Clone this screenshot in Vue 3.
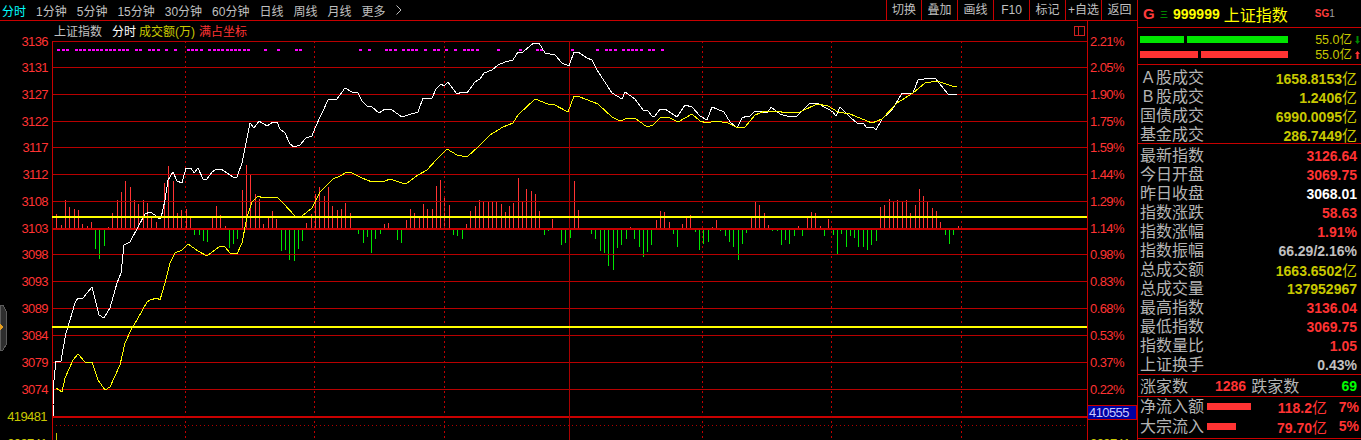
<script setup>
const periods = ['1分钟', '5分钟', '15分钟', '30分钟', '60分钟', '日线', '周线', '月线', '更多']
const tools = ['切换', '叠加', '画线', 'F10', '标记', '+自选', '返回']

// 价格线和百分比刻度
const grid = [
  [41, '3136', '2.21%'], [67, '3131', '2.05%'], [94, '3127', '1.90%'], [121, '3122', '1.75%'],
  [147, '3117', '1.59%'], [174, '3112', '1.44%'], [201, '3108', '1.29%'], [228, '3103', '1.14%'],
  [254, '3098', '0.98%'], [281, '3093', '0.83%'], [308, '3089', '0.68%'], [335, '3084', '0.53%'],
  [362, '3079', '0.37%'], [389, '3074', '0.22%']
]
const dotted = [185, 314, 444, 702, 831, 961]

const slot = (i) => Math.round(52 + 4.3125 * i)

const volumes = [
  0, 14, 3, 28, 21, 19, 18, 4, 2, 6, -20, -30, -17, 1, 15, 28, 36, 47, 41, 28, 24, 28, 25, 12, 6, 0, 45, 62, 47, 15,
  18, 19, 11, -6, -6, -12, -13, 11, 22, 13, 2, -19, -15, -10, 38, 63, 54, 34, 29, 4, 11, 17, 9, -22, -21, -31, -32, -20, -12, 5,
  14, 34, 41, 32, 41, 22, 18, 19, 25, 15, -1, -5, -14, -8, -24, -10, -5, 4, 5, -1, -11, -14, 8, 19, 15, 11, 24, 19, 19, 42,
  48, 31, 23, -6, -7, -10, 4, 17, 22, 28, 27, 26, 26, 26, 24, 16, 22, 25, 50, 26, 39, 37, 34, 17, -6, -2, 9, 0, -16, -14,
  -9, 47, 18, -1, 0, -5, -10, -22, -24, -37, -41, -19, -16, -10, 1, -10, -18, -28, -23, -16, 8, 17, 16, 6, -5, -18, 4, 11, 13, -3,
  -21, -15, -13, 1, 8, -2, -7, -13, -18, -31, -15, -4, 10, 26, 23, 15, 3, -2, -2, -16, -11, -15, -7, 2, -7, 10, 16, 15, 2, -7,
  9, -6, -26, -5, -18, -7, -9, -18, -18, -21, -16, -12, 21, 23, 29, 26, 28, 26, 28, 15, 23, 39, 32, 27, 20, 17, 6, -6, -15, -6, 2
]
const bars = volumes.map((v, i) => ({
  x: slot(i) + 0.5,
  y1: v > 0 ? 228 - v : 229,
  y2: v > 0 ? 228 : 229 + Math.abs(v),
  color: v > 0 ? '#ff3333' : '#00e600',
  on: v !== 0
})).filter((b) => b.on)

const dots = [
  1, 2, 3, 5, 6, 7, 8, 9, 10, 11, 12, 13, 14, 15, 16, 17, 19, 20, 22, 23, 24, 26, 28, 31, 32, 33, 34,
  36, 37, 38, 39, 40, 41, 42, 43, 44, 45, 49, 52, 56, 57, 71, 73, 77, 78, 79, 81, 82, 83, 84, 86, 88, 89,
  91, 93, 95, 96, 97, 98, 103, 108, 112, 113, 120, 126, 128, 129, 130, 132, 133, 134, 135, 136, 138, 139, 141
]

const whiteLine = `53,416 53,405 54,380 56,361 61,361 62,355 66,333 70,320 75,303 78,298 83,298 92,287 99,315 104,318 110,308
  117,283 121,273 124,245 130,242 138,227 145,214 150,212 155,215 158,218 161,218 165,200 168,180 173,172 177,181 182,183
  186,168 191,168 194,173 198,168 203,179 207,179 212,172 217,169 221,169 227,173 233,177 237,177 242,163 245,148 250,123
  254,128 259,121 267,126 273,122 277,122 280,129 285,133 290,144 294,147 300,145 306,138 312,136 315,128 322,113 328,100
  337,99 345,88 352,92 355,92 358,93 362,101 367,106 372,107 379,113 385,109 392,110 402,117 408,115 418,112 423,98 432,98
  436,89 441,84 444,86 448,82 457,94 462,92 467,93 475,82 480,79 484,73 492,70 498,65 505,62 513,60 518,52 523,52 530,46
  534,43 539,43 545,53 550,54 555,55 562,63 569,66 574,52 578,52 587,58 592,60 597,70 612,93 622,99 625,92 635,99 643,110
  648,111 652,116 655,116 660,109 665,109 677,117 685,105 692,107 700,116 707,120 712,107 724,112 730,122 737,128 742,118
  747,116 750,116 755,111 763,112 768,112 771,107 780,114 790,117 797,116 810,103 817,103 828,109 833,112 836,116 840,107
  850,117 858,124 863,123 867,128 873,127 876,130 882,119 892,110 902,93 913,93 918,80 930,78 935,78 948,94 957,94`

const yellowLine = `56,388 62,392 65,378 73,360 78,354 85,362 92,362 98,380 105,390 110,387 120,365 125,343 132,328 137,320 147,302
  150,300 157,298 160,300 165,283 170,263 175,253 182,250 188,244 198,251 207,256 215,250 220,246 225,247 230,253 237,254
  242,243 247,217 252,202 258,196 263,198 277,197 283,203 295,216 302,216 312,208 320,192 333,179 340,176 347,172 352,173
  362,178 372,182 385,181 390,179 402,183 407,183 418,175 427,170 437,159 447,149 457,155 467,157 478,147 490,135 503,127
  513,123 518,115 535,99 548,104 553,104 568,112 574,96 580,97 598,104 612,117 620,121 628,118 635,118 647,127 653,125
  660,118 668,117 678,122 692,114 700,121 707,123 715,121 728,123 738,128 745,127 755,115 765,111 775,111 788,113 800,112
  817,104 828,106 838,112 850,114 872,123 882,119 897,103 913,93 925,83 937,81 952,86 957,86`

const meters = [
  { segs: [44, 101], color: '#00e600', text: '55.0亿', up: false },
  { segs: [58, 87], color: '#ff3333', text: '55.0亿', up: true }
]

const turnover = [
  { tag: 'A', label: '股成交', value: '1658.8153', unit: '亿' },
  { tag: 'B', label: '股成交', value: '1.2406', unit: '亿' },
  { label: '国债成交', value: '6990.0095', unit: '亿' },
  { label: '基金成交', value: '286.7449', unit: '亿' }
]

const stats = [
  { label: '最新指数', value: '3126.64', tone: 'red' },
  { label: '今日开盘', value: '3069.75', tone: 'red' },
  { label: '昨日收盘', value: '3068.01', tone: 'white' },
  { label: '指数涨跌', value: '58.63', tone: 'red' },
  { label: '指数涨幅', value: '1.91%', tone: 'red' },
  { label: '指数振幅', value: '66.29/2.16%', tone: 'gray' },
  { label: '总成交额', value: '1663.6502', unit: '亿', tone: 'olive' },
  { label: '总成交量', value: '137952967', tone: 'olive' },
  { label: '最高指数', value: '3136.04', tone: 'red' },
  { label: '最低指数', value: '3069.75', tone: 'red' },
  { label: '指数量比', value: '1.05', tone: 'red' },
  { label: '上证换手', value: '0.43%', tone: 'gray' }
]

const flows = [
  { label: '净流入额', width: 44, value: '118.2', pct: '7%' },
  { label: '大宗流入', width: 29, value: '79.70', pct: '5%' }
]
</script>

<template>
  <div class="screen">
    <div class="main">
      <div class="toolbar">
        <span class="period active">分时</span>
        <span v-for="p in periods" :key="p" class="period">{{ p }}</span>
        <svg class="more" width="6" height="10" viewBox="0 0 6 10">
          <path d="M0.5 0.5 L5 5 L0.5 9.5" fill="none" stroke="#c0c0c0" />
        </svg>
        <div class="tools">
          <span v-for="t in tools" :key="t" class="tool">{{ t }}</span>
        </div>
      </div>

      <svg class="chart" width="1137" height="419" viewBox="0 21 1137 419">
        <g shape-rendering="crispEdges">
          <polygon points="0,305 3,305 6,311 6,345 3,350 0,350" fill="#2e2e2e" stroke="#5c5c5c" />
          <polygon points="0,323 3,327 0,331" fill="#e8a020" />

          <line v-for="b in bars" :key="b.x" :x1="b.x" :x2="b.x" :y1="b.y1" :y2="b.y2" :stroke="b.color" />

          <line v-for="g in grid" :key="g[0]" x1="52" x2="1087" :y1="g[0] + 0.5" :y2="g[0] + 0.5" stroke="#b80000" />
          <rect x="52" y="228" width="1035" height="2" fill="#c80000" />
          <rect x="52" y="416" width="1035" height="2" fill="#c80000" />
          <line x1="52" x2="1087" y1="425.5" y2="425.5" stroke="#b00000" stroke-dasharray="1 3" />

          <line v-for="x in dotted" :key="x" :x1="x + 0.5" :x2="x + 0.5" y1="41" y2="440" stroke="#c00000" stroke-dasharray="2 3" />
          <line x1="569.5" x2="569.5" y1="41" y2="440" stroke="#a80000" />
          <line x1="52.5" x2="52.5" y1="41" y2="440" stroke="#c80000" />
          <line x1="1087.5" x2="1087.5" y1="21" y2="440" stroke="#c80000" />

          <rect v-for="d in dots" :key="d" :x="slot(d) + 1" y="49" width="3" height="2" fill="#ff00ff" />

          <polyline :points="whiteLine" fill="none" stroke="#ffffff" />
          <polyline :points="yellowLine" fill="none" stroke="#ffff00" />

          <rect x="52" y="216" width="1035" height="2" fill="#ffff00" />
          <rect x="52" y="326" width="1035" height="2" fill="#ffff00" />

          <rect x="1074.5" y="26.5" width="10" height="9" fill="none" stroke="#d02020" />
          <line x1="1078.5" x2="1078.5" y1="26" y2="36" stroke="#d02020" />

          <rect x="56" y="433" width="1" height="7" fill="#c8c800" />
          <rect x="1087.5" y="405.5" width="49" height="14" fill="#0000a0" stroke="#c80000" />
        </g>

        <text x="54" y="36" class="head gray">上证指数</text>
        <text x="112" y="36" class="head white">分时</text>
        <text x="139" y="36" class="head olive">成交额(万)</text>
        <text x="199" y="36" class="head red">满占坐标</text>

        <template v-for="g in grid" :key="g[0]">
          <text x="48" :y="g[0] + 5" class="axis left">{{ g[1] }}</text>
          <text x="1090" :y="g[0] + 5" class="axis">{{ g[2] }}</text>
        </template>

        <text x="47" y="421" class="axis left olive-fill">419481</text>
        <text x="47" y="448" class="axis left olive-fill">209741</text>
        <text x="1089" y="417" class="axis blue-cell">410555</text>
        <text x="1090" y="448" class="axis olive-fill">209741</text>
      </svg>
    </div>

    <aside class="panel">
      <div class="title">
        <span class="g">G</span>
        <span class="menu">三</span>
        <span class="code">999999</span>
        <span class="name">上证指数</span>
        <span class="sg">SG<i>1</i></span>
      </div>

      <div class="meters">
        <div v-for="(m, idx) in meters" :key="idx" class="meter">
          <div class="segs">
            <span v-for="(w, j) in m.segs" :key="j" :style="{ width: w + 'px', background: m.color }"></span>
          </div>
          <span class="meter-text">{{ m.text }}</span>
          <svg class="arrow" width="5" height="8" viewBox="0 0 5 8">
            <path v-if="m.up" d="M2.5 0 L5 3 L3.5 3 L3.5 8 L1.5 8 L1.5 3 L0 3 Z" fill="#ff3333" />
            <path v-else d="M2.5 8 L5 5 L3.5 5 L3.5 0 L1.5 0 L1.5 5 L0 5 Z" fill="#008800" />
          </svg>
        </div>
      </div>

      <div class="section turnover">
        <div v-for="r in turnover" :key="r.label + r.value" class="row">
          <span class="label"><span v-if="r.tag" class="tag">{{ r.tag }}</span>{{ r.label }}</span>
          <span class="value olive">{{ r.value }}<span class="unit">{{ r.unit }}</span></span>
        </div>
      </div>

      <div class="section stats">
        <div v-for="r in stats" :key="r.label" class="row">
          <span class="label">{{ r.label }}</span>
          <span class="value" :class="r.tone">{{ r.value }}<span v-if="r.unit" class="unit">{{ r.unit }}</span></span>
        </div>
      </div>

      <div class="section breadth">
        <span class="label">涨家数</span>
        <span class="value red count">1286</span>
        <span class="label fall">跌家数</span>
        <span class="value green last">69</span>
      </div>

      <div class="section flows">
        <div v-for="f in flows" :key="f.label" class="flow">
          <span class="label">{{ f.label }}</span>
          <span class="flow-bar" :style="{ width: f.width + 'px' }"></span>
          <span class="value red flow-value">{{ f.value }}<span class="unit">亿</span></span>
          <span class="value red flow-pct">{{ f.pct }}</span>
        </div>
      </div>
    </aside>
  </div>
</template>

<style scoped>
.screen {
  display: flex;
  width: 1361px;
  height: 440px;
  overflow: hidden;
  background: #000;
  font-family: "Liberation Sans", "Noto Sans CJK SC", sans-serif;
  color: #c0c0c0;
}

.main {
  width: 1137px;
  flex: none;
}

.toolbar {
  display: flex;
  align-items: center;
  gap: 10px;
  height: 20px;
  padding-left: 2px;
  border-bottom: 1px solid #c80000;
  font-size: 12px;
}

.period.active {
  color: #00ffff;
}

.more {
  margin-left: 0;
}

.tools {
  display: flex;
  height: 20px;
  margin-left: auto;
}

.tool {
  width: 36px;
  box-sizing: border-box;
  border-left: 1px solid #c80000;
  line-height: 20px;
  text-align: center;
}

.tool:first-child {
  width: 35px;
}

.chart {
  display: block;
}

.head {
  font-size: 12px;
}

.gray {
  fill: #c0c0c0;
  color: #c0c0c0;
}

.white {
  fill: #fff;
  color: #fff;
}

.olive {
  fill: #c8c800;
  color: #c8c800;
}

.red {
  fill: #ff3333;
  color: #ff3333;
}

.green {
  color: #00ff00;
}

.axis {
  font-size: 13px;
  letter-spacing: -0.6px;
  fill: #ff3333;
}

.axis.left {
  text-anchor: end;
}

.axis.olive-fill {
  fill: #c8c800;
}

.axis.blue-cell {
  fill: #c8c8ff;
}

.panel {
  width: 224px;
  flex: none;
  border-left: 1px solid #c80000;
  box-sizing: border-box;
}

.title {
  display: flex;
  align-items: center;
  height: 27px;
  border-bottom: 1px solid #c80000;
  color: #ffff00;
}

.g {
  margin-left: 5px;
  width: 9px;
  color: #ff3c3c;
  font-size: 15px;
  font-weight: bold;
}

.menu {
  margin-left: 8px;
  width: 8px;
  color: #00e000;
  font-size: 8px;
}

.code {
  margin-left: 5px;
  font-size: 14px;
  font-weight: bold;
}

.name {
  margin-left: 4px;
  font-size: 16px;
}

.sg {
  margin-left: 27px;
  color: #ff3c3c;
  font-size: 10px;
  font-weight: bold;
}

.sg i {
  color: #a0a0a0;
  font-style: normal;
  font-weight: normal;
}

.meters {
  display: flex;
  flex-direction: column;
  gap: 8px;
  height: 37px;
  box-sizing: border-box;
  padding: 8px 0 0 2px;
  border-bottom: 1px solid #c80000;
}

.meter {
  display: flex;
  align-items: center;
  height: 7px;
}

.segs {
  display: flex;
  gap: 3px;
  height: 7px;
}

.segs span {
  display: block;
}

.meter-text {
  margin-left: auto;
  color: #c8c800;
  font-size: 12.5px;
  white-space: nowrap;
  position: relative;
  top: -1px;
}

.arrow {
  margin: 0 1px 0 3px;
}

.section {
  border-bottom: 1px solid #c80000;
}

.turnover {
  height: 79px;
  box-sizing: border-box;
  padding-top: 3px;
}

.stats {
  height: 231px;
  box-sizing: border-box;
  padding-top: 2px;
}

.row {
  display: flex;
  justify-content: space-between;
  align-items: center;
  height: 19px;
  padding: 0 4px 0 2px;
}

.label {
  color: #b4b4b4;
  font-size: 16px;
  line-height: 19px;
  white-space: nowrap;
}

.tag {
  display: inline-block;
  width: 16px;
  text-align: center;
}

.value {
  font-size: 14px;
  font-weight: bold;
  white-space: nowrap;
}

.unit {
  font-size: 15px;
  font-weight: normal;
}

.breadth {
  display: flex;
  align-items: center;
  height: 22px;
  box-sizing: border-box;
  padding: 1px 4px 0 2px;
}

.count {
  margin-left: 27px;
}

.fall {
  margin-left: 5px;
}

.last {
  margin-left: auto;
}

.flows {
  height: 42px;
  box-sizing: border-box;
}

.flow {
  display: flex;
  align-items: center;
  height: 19.5px;
  padding-left: 2px;
}

.flow-bar {
  height: 7px;
  margin-left: 3px;
  background: #ff3333;
}

.flow-value {
  margin-left: auto;
}

.flow-pct {
  width: 34px;
  padding-right: 2px;
  box-sizing: border-box;
  text-align: right;
}
</style>

<style>
html,
body {
  margin: 0;
  background: #000;
  overflow: hidden;
}
</style>
